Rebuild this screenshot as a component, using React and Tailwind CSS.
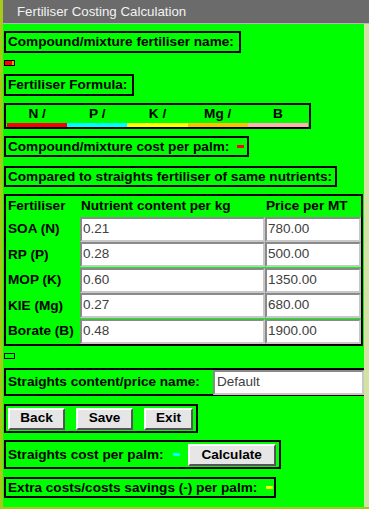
import React from "react";

const box = "border-2 border-black";
const lbl = "font-bold text-[13.6px] leading-[16px] text-black";

function Inp({ value }) {
  return (
    <div className="h-[25px] bg-white border-2 border-t-[#8a8a8a] border-l-[#8a8a8a] border-b-[#c8c8c8] border-r-[#c8c8c8] flex items-center pl-[1px] text-[13.5px] text-[#404040]">
      {value}
    </div>
  );
}

function Btn({ children, className = "" }) {
  return (
    <div className={"h-[22px] shrink-0 bg-[#e6e6e6] border-2 border-t-white border-l-white border-b-[#555] border-r-[#555] flex items-center justify-center font-bold text-[13.6px] text-black " + className}>
      {children}
    </div>
  );
}

export default function App() {
  const rows = [
    ["SOA (N)", "0.21", "780.00"],
    ["RP (P)", "0.28", "500.00"],
    ["MOP (K)", "0.60", "1350.00"],
    ["KIE (Mg)", "0.27", "680.00"],
    ["Borate (B)", "0.48", "1900.00"],
  ];
  const formula = [
    ["N /", "bg-[#ff0000]"],
    ["P /", "bg-[#00ffff]"],
    ["K /", "bg-[#ffff00]"],
    ["Mg /", "bg-[#ffc000]"],
    ["B", "bg-[#ffb0b0]"],
  ];
  return (
    <div className="w-[369px] h-[512px] bg-white font-['Liberation_Sans',Arial,sans-serif]">
      <div className="h-[509px] border-l-[3px] border-b-[2px] border-[#a6c91a] flex flex-col overflow-hidden">
        <div className="h-[23px] shrink-0 bg-[#6b6b6b] text-[#f2f2f2] text-[13.3px] flex items-center pl-[14px]">
          Fertiliser Costing Calculation
        </div>
        <div className="h-[1px] shrink-0 bg-[#b8b8b8]" />
        <div className="flex flex-1">
          <div className="w-[361px] bg-[#00ff00] pl-[1px] pt-[7px] flex flex-col items-start overflow-hidden">
            <div className={box + " h-[22px] w-[237px] flex items-center pl-[2px] whitespace-nowrap " + lbl}>
              Compound/mixture fertiliser name:
            </div>
            <div className="mt-[7px] w-[11px] h-[6px] border border-black bg-[#ff0000] flex justify-end">
              <div className="w-[2px] h-full bg-[#e0a000]" />
            </div>
            <div className={box + " mt-[8px] h-[22px] w-[130px] flex items-center pl-[2px] whitespace-nowrap " + lbl}>
              Fertiliser Formula:
            </div>
            <div className={box + " mt-[7px] h-[26px] w-[307px] grid grid-cols-5 px-[1px]"}>
              {formula.map(([t, c]) => (
                <div key={t} className="flex flex-col">
                  <div className={"flex-1 flex items-center justify-center " + lbl}>{t}</div>
                  <div className={"h-[4px] " + c} />
                </div>
              ))}
            </div>
            <div className={box + " mt-[7px] h-[21px] w-[245px] flex items-center pl-[2px] whitespace-nowrap " + lbl}>
              Compound/mixture cost per palm:
              <span className="ml-[8px] w-[7px] h-[3px] bg-[#ff0000]" />
            </div>
            <div className={box + " mt-[9px] h-[21px] w-[333px] flex items-center pl-[2px] whitespace-nowrap " + lbl}>
              Compared to straights fertiliser of same nutrients:
            </div>
            <div className={box + " mt-[7px] w-[359px] h-[152px] flex flex-col"}>
              <div className="h-[21px] flex items-center whitespace-nowrap">
                <div className={"w-[74px] pl-[2px] " + lbl}>Fertiliser</div>
                <div className={"w-[185px] pl-[1px] " + lbl}>Nutrient content per kg</div>
                <div className={"pl-[1px] " + lbl}>Price per MT</div>
              </div>
              {rows.map(([a, b, c]) => (
                <div key={a} className="h-[26px] flex items-start">
                  <div className={"w-[74px] h-[25px] flex items-center pl-[2px] whitespace-nowrap " + lbl}>{a}</div>
                  <div className="w-[185px]"><Inp value={b} /></div>
                  <div className="flex-1"><Inp value={c} /></div>
                </div>
              ))}
            </div>
            <div className="mt-[7px] w-[11px] h-[6px] border border-black" />
            <div className="mt-[9px] h-[28px] w-[370px] border-2 border-black flex items-center shrink-0">
              <div className={"w-[207px] pl-[2px] whitespace-nowrap " + lbl}>Straights content/price name:</div>
              <div className="w-[151px] h-[25px] bg-white border-2 border-t-[#8a8a8a] border-l-[#8a8a8a] border-b-[#c8c8c8] border-r-[#c8c8c8] flex items-center pl-[2px] text-[13.5px] text-[#404040]">
                Default
              </div>
            </div>
            <div className={box + " mt-[8px] h-[29px] w-[194px] flex items-center pl-[2px] gap-[11px]"}>
              <Btn className="w-[57px]">Back</Btn>
              <Btn className="w-[57px]">Save</Btn>
              <Btn className="w-[49px]">Exit</Btn>
            </div>
            <div className={box + " mt-[7px] h-[29px] w-[277px] flex items-center pl-[2px] whitespace-nowrap " + lbl}>
              Straights cost per palm:
              <span className="ml-[9px] w-[7px] h-[3px] bg-[#00ffff]" />
              <Btn className="ml-[8px] w-[88px]">Calculate</Btn>
            </div>
            <div className={box + " mt-[8px] h-[21px] w-[272px] flex items-center pl-[2px] whitespace-nowrap " + lbl}>
              Extra costs/costs savings (-) per palm:
              <span className="ml-[9px] w-[7px] h-[3px] bg-[#ffff00]" />
            </div>
          </div>
          <div className="flex-1 bg-[#d4e2a4]" />
        </div>
      </div>
    </div>
  );
}
